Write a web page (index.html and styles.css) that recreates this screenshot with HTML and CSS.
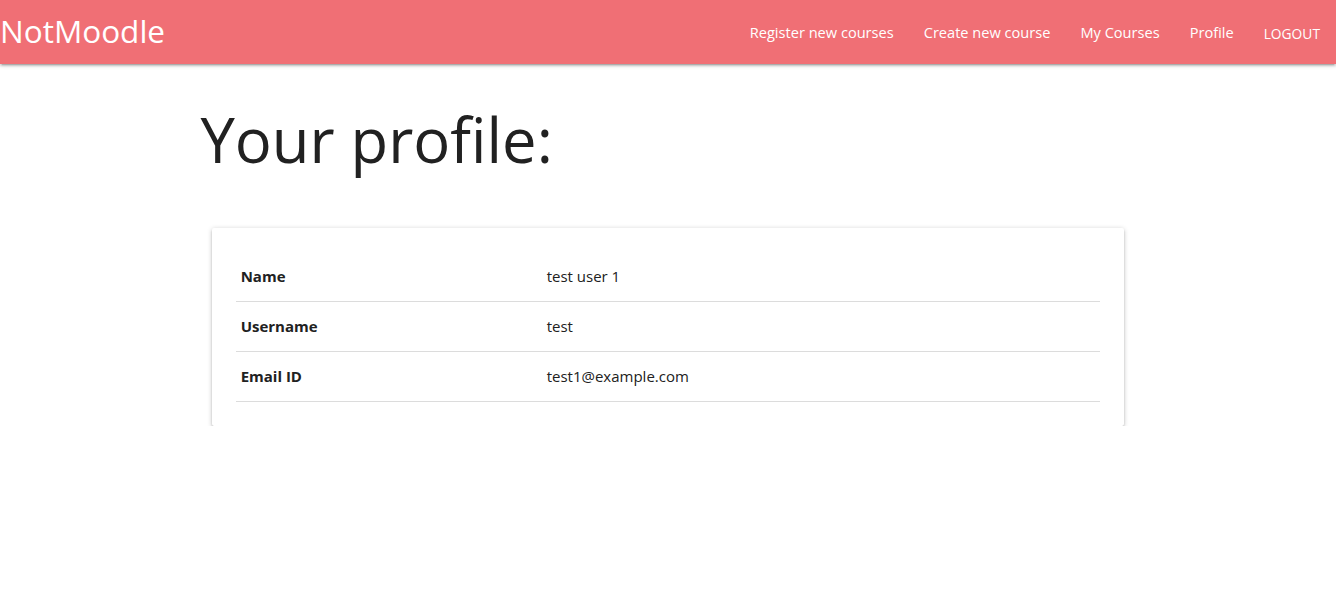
FILE: index.html
```html
<!DOCTYPE html>
<html>
<head>
<meta charset="utf-8">
<title>NotMoodle</title>
<link rel="stylesheet" href="styles.css">
</head>
<body>
<nav class="navbar">
  <a class="brand" href="#">NotMoodle</a>
  <ul class="nav-links">
    <li><a href="#">Register new courses</a></li>
    <li><a href="#">Create new course</a></li>
    <li><a href="#">My Courses</a></li>
    <li><a href="#">Profile</a></li>
    <li><a href="#" class="logout">LOGOUT</a></li>
  </ul>
</nav>
<main class="container">
  <h1 class="title">Your profile:</h1>
  <div class="card">
    <table class="profile-table">
      <tr><td class="label">Name</td><td class="value">test user 1</td></tr>
      <tr><td class="label">Username</td><td class="value">test</td></tr>
      <tr><td class="label">Email ID</td><td class="value">test1@example.com</td></tr>
    </table>
  </div>
</main>
</body>
</html>
```
FILE: styles.css
```css
html { font-size: 15px; }
body {
  margin: 0;
  font-family: "Open Sans", "Noto Sans", sans-serif;
  color: rgba(0,0,0,0.87);
  background: #fff;
}
.navbar {
  height: 64px;
  background: #f06f75;
  display: flex;
  align-items: center;
  justify-content: space-between;
  box-shadow: 0 2px 2px 0 rgba(0,0,0,0.14), 0 3px 1px -2px rgba(0,0,0,0.12), 0 1px 5px 0 rgba(0,0,0,0.2);
}
.brand {
  color: #fff;
  text-decoration: none;
  font-size: 2.1rem;
  line-height: 64px;
  padding-bottom: 2px;
}
.nav-links {
  list-style: none;
  margin: 0;
  padding: 0;
  display: flex;
  height: 64px;
}
.nav-links a {
  display: block;
  padding: 0 15px;
  line-height: 64px;
  color: #fff;
  text-decoration: none;
  font-size: 14.6px;
}
.nav-links a.logout {
  font-size: 13.8px;
  padding: 2px 16px 0 15px;
}
.container {
  width: 70%;
  margin: 0 auto;
}
.title {
  font-size: 4.1rem;
  font-weight: 400;
  line-height: 110%;
  margin: 42px 0 0 0;
  color: #212121;
}
.card {
  margin: 54px 11.25px 0;
  background: #fff;
  border-radius: 2px;
  padding: 24px;
  box-shadow: 0 2px 2px 0 rgba(0,0,0,0.16), 0 3px 1px -2px rgba(0,0,0,0.14), 0 1px 5px 0 rgba(0,0,0,0.22);
}
.profile-table {
  width: 100%;
  border-collapse: collapse;
}
.profile-table tr { border-bottom: 1px solid #dcdcdc; }
.profile-table td {
  padding: 0 5px 1px;
  height: 48px;
  font-size: 15px;
  color: #212121;
}
.profile-table td.label { width: 296px; font-weight: 700; }
```
